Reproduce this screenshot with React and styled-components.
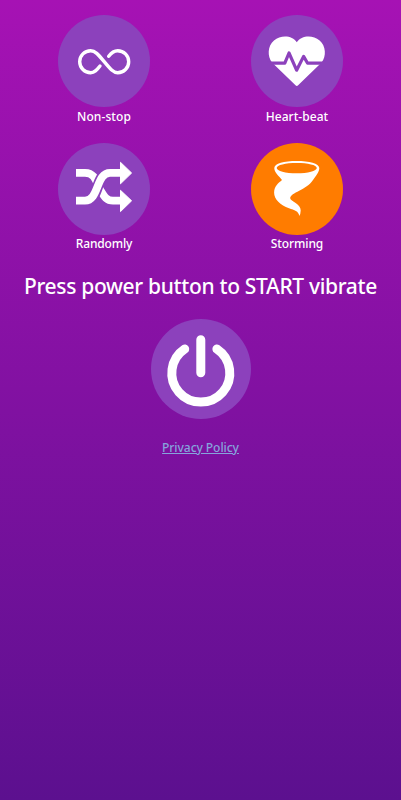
import React, { useState } from 'react'
import styled, { createGlobalStyle } from 'styled-components'

const GlobalStyle = createGlobalStyle`
  * {
    box-sizing: border-box;
  }
  body {
    margin: 0;
    font-family: "Noto Sans", "Open Sans", sans-serif;
  }
`

const InfinityIcon = () => (
  <svg viewBox="0 0 92 92" fill="none" stroke="#fff" strokeWidth="3.4" strokeLinecap="round">
    <path d="M42 51C38.5 55.5 36.5 57.7 32.7 57.7A11 11 0 0 1 32.7 35.7C37 35.7 40 39.2 46.2 46.7C52.4 54.2 55.4 57.7 59.7 57.7A11 11 0 0 0 59.7 35.7C56 35.7 53.5 37.5 50.7 41.3" />
  </svg>
)

const HeartIcon = () => (
  <svg viewBox="0 0 92 92" fill="none">
    <path fill="#fff" d="M45.8 27.3C41.5 20.5 30 19.6 23 25.5C16.5 31 16.2 41 21 47.6L44.5 70.3Q45.8 71.5 47.1 70.3L70.6 47.6C75.5 41 75 31 68.6 25.5C61.5 19.6 50.2 20.5 45.8 27.3Z" />
    <path stroke="#8c41bc" strokeWidth="3.2" strokeLinejoin="round" d="M16 48.2H33.8L38 38L45.6 55.2L52.6 41.4L56.6 48.2H76" />
  </svg>
)

const ShuffleIcon = () => (
  <svg viewBox="0 0 92 92" fill="none" strokeWidth="7.8">
    <path stroke="#fff" d="M18 29.8H27C38 29.8 38.5 41 42 46.5C46 53 48 57.7 55 57.7H64" />
    <path stroke="#8c41bc" strokeWidth="11" d="M28 57.7C41.5 57.7 37.5 29.8 51.5 29.8" />
    <path stroke="#fff" d="M18 57.7H27C41 57.7 38 29.8 52 29.8H64" />
    <path fill="#fff" stroke="#fff" strokeWidth="1" strokeLinejoin="round" d="M62.5 19.3L73.6 30L62.5 40.8ZM62.5 47.3L73.6 57.8L62.5 68.6Z" />
  </svg>
)

const TornadoIcon = () => (
  <svg viewBox="0 0 92 92">
    <path fill="#fff" fillRule="evenodd" d="M45.7 18C58 18 68.3 20.6 68.3 25C68.3 29 64.8 33 62 37C55.5 47 39.5 49.5 39.2 55.2C39.5 58.5 50 60.5 49.7 67.5Q49.6 71 48.3 73C47.5 68 43.5 67 38 65.2C29.5 62.2 23 56.5 23.1 49.5C23.2 43 27.5 40 31 37C28 33 23.3 29.5 23.3 25C23.3 20.6 33 18 45.7 18ZM45.7 19.9C34.5 19.9 25.7 21.9 25.7 24.9S34.5 30.2 45.7 30.2S65.8 27.9 65.8 24.9S57 19.9 45.7 19.9Z" />
  </svg>
)

const PowerIcon = () => (
  <svg viewBox="0 0 100 100" fill="none" stroke="#fff" strokeWidth="9" strokeLinecap="round">
    <path d="M49.8 20.8V53.800M33.700 30A29 29 0 1 0 65.900 30" />
  </svg>
)

const modes = [
  { name: 'Non-stop', icon: <InfinityIcon />, spacing: '0.1px' },
  { name: 'Heart-beat', icon: <HeartIcon />, spacing: '0.05px' },
  { name: 'Randomly', icon: <ShuffleIcon />, spacing: '-0.15px' },
  { name: 'Storming', icon: <TornadoIcon />, spacing: '-0.1px' },
]

const App = () => {
  const [active, setActive] = useState('Storming')
  const [running, setRunning] = useState(false)

  return (
    <Screen>
      <GlobalStyle />
      <Modes>
        {modes.map((mode) => (
          <Mode key={mode.name} onClick={() => setActive(mode.name)}>
            <ModeCircle $active={active === mode.name}>{mode.icon}</ModeCircle>
            <ModeLabel $spacing={mode.spacing}>{mode.name}</ModeLabel>
          </Mode>
        ))}
      </Modes>
      <Hint>Press power button to {running ? 'STOP' : 'START'} vibrate</Hint>
      <PowerButton onClick={() => setRunning(!running)} aria-label="Power">
        <PowerIcon />
      </PowerButton>
      <PolicyLink href="#">Privacy Policy</PolicyLink>
    </Screen>
  )
}

const Screen = styled.main`
  display: flex;
  flex-direction: column;
  align-items: center;
  width: 100%;
  height: 800px;
  padding-top: 15.4px;
  background: linear-gradient(#a612b4, #5c108f);
`

const Modes = styled.div`
  display: grid;
  grid-template-columns: 92px 92px;
  grid-auto-rows: 111.5px;
  column-gap: 101px;
  row-gap: 16px;
`

const Mode = styled.button`
  display: flex;
  flex-direction: column;
  align-items: center;
  padding: 0;
  border: 0;
  background: none;
  font-family: inherit;
  cursor: pointer;
`

const ModeCircle = styled.span`
  display: block;
  flex: none;
  width: 92px;
  height: 92px;
  border-radius: 50%;
  background: ${(props) => (props.$active ? '#ff7c00' : '#8c41bc')};

  svg {
    display: block;
  }
`

const ModeLabel = styled.span`
  margin-top: 0.2px;
  color: #fff;
  font-size: 12px;
  font-weight: 500;
  line-height: 18px;
  letter-spacing: ${(props) => props.$spacing};
  white-space: nowrap;
`

const Hint = styled.h1`
  margin: 16.6px 0 0;
  color: #fff;
  font-size: 21px;
  font-weight: 500;
  line-height: 30px;
  letter-spacing: -0.33px;
  white-space: nowrap;
`

const PowerButton = styled.button`
  display: block;
  width: 100px;
  height: 100px;
  margin-top: 18px;
  padding: 0;
  border: 0;
  border-radius: 50%;
  background: #8c41bc;
  cursor: pointer;

  svg {
    display: block;
  }
`

const PolicyLink = styled.a`
  margin-top: 20px;
  color: #86a4dc;
  font-size: 12px;
  font-weight: 500;
  line-height: 18px;
  letter-spacing: -0.05px;
`

export default App
